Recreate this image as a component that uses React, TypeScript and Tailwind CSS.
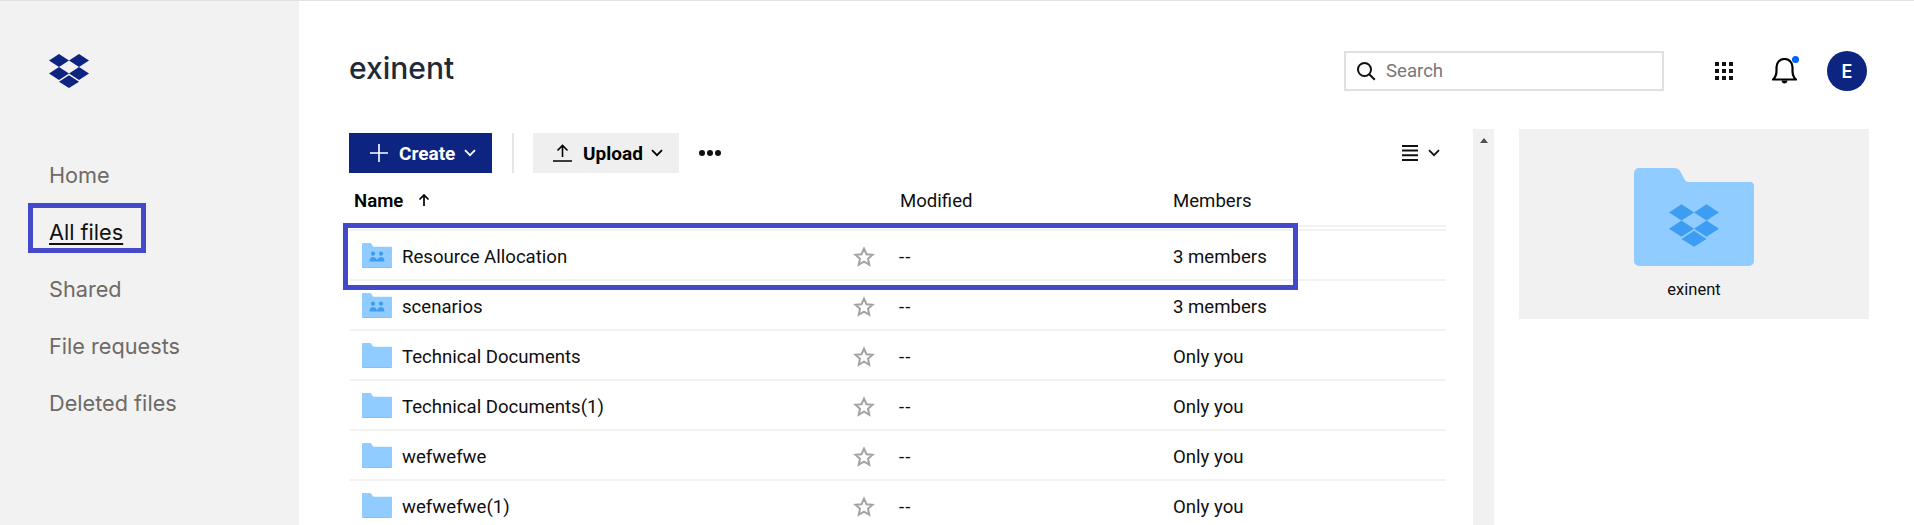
import React from "react";

const rows = [
  { name: "Resource Allocation", shared: true, members: "3 members" },
  { name: "scenarios", shared: true, members: "3 members" },
  { name: "Technical Documents", shared: false, members: "Only you" },
  { name: "Technical Documents(1)", shared: false, members: "Only you" },
  { name: "wefwefwe", shared: false, members: "Only you" },
  { name: "wefwefwe(1)", shared: false, members: "Only you" },
];

function DropboxMark({ className, fill }: { className: string; fill: string }) {
  return (
    <svg viewBox="0 0 40 34" className={className} fill={fill}>
      <polygon points="0,6.5 10,0 20,6.5 10,13" />
      <polygon points="20,6.5 30,0 40,6.5 30,13" />
      <polygon points="0,19.5 10,13 20,19.5 10,26" />
      <polygon points="20,19.5 30,13 40,19.5 30,26" />
      <polygon points="10,27.7 20,21.2 30,27.7 20,34" />
    </svg>
  );
}

function FolderIcon({ shared }: { shared: boolean }) {
  return (
    <svg viewBox="0 0 30 25" className="w-[30px] h-[25px] shrink-0">
      <path d="M0 1.2C0 .5.5 0 1.2 0H8c.7 0 1.2.3 1.5.9L10.6 3c.3.5.6.7 1.2.7H29c.6 0 1 .4 1 1V23.8c0 .7-.5 1.2-1.2 1.2H1.2C.5 25 0 24.5 0 23.8Z" fill="#90ccff" />
      <path d="M0 23.8V23.2c0 .7.5 1 1.2 1h27.6c.7 0 1.2-.3 1.2-1v.6c0 .7-.5 1.2-1.2 1.2H1.2C.5 25 0 24.5 0 23.8Z" fill="#7cbdf5" />
      {shared && (
        <g fill="#3d9df2">
          <circle cx="11" cy="10.7" r="2.1" />
          <circle cx="19" cy="10.7" r="2.1" />
          <path d="M7.5 18.5c0-3 1.6-4.4 3.5-4.4 1.5 0 2.9.9 3.4 2.3h1.2c.5-1.4 1.9-2.3 3.4-2.3 1.9 0 3.5 1.4 3.5 4.4Z" />
        </g>
      )}
    </svg>
  );
}

function Star() {
  return (
    <svg viewBox="0 0 22 21" className="w-[22px] h-[21px] shrink-0" fill="none" stroke="#a3a3a3" strokeWidth="2">
      <path d="M11 2.6l2.5 5.6 6 .6-4.5 4 1.3 6-5.3-3.1-5.3 3.1 1.3-6-4.5-4 6-.6Z" strokeLinejoin="miter" />
    </svg>
  );
}

function Chevron({ stroke }: { stroke: string }) {
  return (
    <svg viewBox="0 0 12 8" className="w-[12px] h-[8px]" fill="none" stroke={stroke} strokeWidth="1.8">
      <path d="M1 1.2l5 5 5-5" />
    </svg>
  );
}

export default function App() {
  return (
    <div className="relative h-[525px] w-[1914px] overflow-hidden bg-white border-t border-[#e2e2e8] font-['Roboto',sans-serif] text-[#0f0f0f]">
      <div className="flex h-full">
        <aside className="w-[299px] shrink-0 bg-[#f2f2f2] pl-[49px] pt-[53px] font-['Inter',sans-serif]">
          <DropboxMark className="w-[40px] h-[34px]" fill="#0d2481" />
          <nav className="mt-[59px] flex flex-col text-[21.7px] text-[#6f6a65]">
            <a className="h-[57px] flex items-center">Home</a>
            <a className="h-[57px] flex items-center text-[#111]"><span className="underline underline-offset-[3px] decoration-2">All files</span></a>
            <a className="h-[57px] flex items-center">Shared</a>
            <a className="h-[57px] flex items-center">File requests</a>
            <a className="h-[57px] flex items-center">Deleted files</a>
          </nav>
        </aside>

        <main className="flex-1 min-w-0 pl-[50px]">
          <header className="h-[128px] flex items-start">
            <h1 className="w-[104px] mt-[45px] text-[30px] leading-[44px] font-medium font-['Inter',sans-serif] text-[#1e2a38]">exinent</h1>
            <div className="ml-[891px] mt-[50px] w-[320px] h-[40px] border-2 border-[#e0e0e0] flex items-center pl-[10px]">
              <svg viewBox="0 0 20 20" className="w-[20px] h-[20px]" fill="none" stroke="#111" strokeWidth="2">
                <circle cx="8.5" cy="8.5" r="6.5" />
                <path d="M13.2 13.2l5.6 5.6" />
              </svg>
              <span className="ml-[10px] pt-[2px] text-[18.6px] text-[#777]">Search</span>
            </div>
            <div className="ml-[51px] mt-[61px] grid grid-cols-3 gap-[3px]">
              {Array.from({ length: 9 }).map((_, i) => (
                <div key={i} className="w-[4px] h-[4px] bg-[#111]" />
              ))}
            </div>
            <div className="relative ml-[39px] mt-[57px] w-[25px] h-[26px]">
              <svg viewBox="0 0 25 26" className="w-[25px] h-[26px]" fill="none" stroke="#000" strokeWidth="2.2">
                <path d="M1 21.5c2.5-2 3.500-4.500 3.500-9V9a8 8 0 0 1 16 0v3.500c0 4.500 1 7 3.500 9Z" strokeLinejoin="round" />
                <path d="M9.500 22.500c.3 2 1.500 3 3 3s2.700-1 3-3Z" fill="#000" stroke="none" />
              </svg>
              <span className="absolute left-[20px] -top-[2px] w-[7px] h-[7px] rounded-full bg-[#0061fe]" />
            </div>
            <div className="ml-[30px] mt-[50px] w-[40px] h-[40px] rounded-full bg-[#0d2481] text-white flex items-center justify-center text-[18px] font-semibold font-['Inter',sans-serif]">E</div>
          </header>

          <div className="flex">
            <section className="w-[1124px] shrink-0">
              <div className="flex h-[40px] mt-[4px] items-center">
                <button className="w-[143px] h-[40px] bg-[#0d2481] text-white flex items-center pl-[21px] text-[19px] font-bold">
                  <svg viewBox="0 0 18 18" className="w-[18px] h-[18px]" stroke="#fff" strokeWidth="1.6"><path d="M9 0v18M0 9h18" /></svg>
                  <span className="ml-[11px] pt-[2px]">Create</span>
                  <span className="ml-[9px]"><Chevron stroke="#fff" /></span>
                </button>
                <div className="ml-[20px] w-[2px] h-[40px] bg-[#e6e6e6]" />
                <button className="ml-[19px] w-[146px] h-[40px] bg-[#efefef] flex items-center pl-[20px] text-[19px] font-bold text-black">
                  <svg viewBox="0 0 19 18" className="w-[19px] h-[18px]" fill="none" stroke="#000" strokeWidth="1.6"><path d="M0 17h19M9.500 13V1.500M4.500 6.500l5-5 5 5" /></svg>
                  <span className="ml-[11px] pt-[2px]">Upload</span>
                  <span className="ml-[8px]"><Chevron stroke="#000" /></span>
                </button>
                <div className="ml-[20px] flex gap-[2px]">
                  <span className="w-[6px] h-[6px] rounded-full bg-[#111]" />
                  <span className="w-[6px] h-[6px] rounded-full bg-[#111]" />
                  <span className="w-[6px] h-[6px] rounded-full bg-[#111]" />
                </div>
                <div className="ml-auto mr-[33px] flex items-center gap-[10px]">
                  <svg viewBox="0 0 16 16" className="w-[16px] h-[16px]" fill="#111">
                    <path d="M0 0h16v2H0zM0 4.600h16v2H0zM0 9.200h16v2H0zM0 14h16v2H0z" />
                  </svg>
                  <Chevron stroke="#111" />
                </div>
              </div>

              <div className="w-[1096px] ml-px">
                <div className="h-[54px] pt-[3px] flex items-center border-b-2 border-[#f2f2f2] text-[18.6px]">
                  <div className="w-[550px] pl-[4px] pt-[2px] flex items-center font-semibold text-black">
                    Name
                    <svg viewBox="0 0 12 12" className="ml-[15px] -mt-[2px] w-[12px] h-[12px]" fill="none" stroke="#000" strokeWidth="1.700"><path d="M6 12V1M1.500 5.500L6 1l4.500 4.500" /></svg>
                  </div>
                  <div className="w-[273px] pt-[3px]">Modified</div>
                  <div className="pt-[3px]">Members</div>
                </div>
                <div className="h-[2px]" />
                {rows.map((r) => (
                  <div key={r.name} className="h-[50px] pt-[2px] flex items-center border-t-2 border-[#f2f2f2] text-[18.6px]">
                    <div className="w-[503px] pl-[12px] flex items-center">
                      <FolderIcon shared={r.shared} />
                      <span className="ml-[10px] pt-[3px]">{r.name}</span>
                    </div>
                    <div className="w-[47px]"><Star /></div>
                    <div className="w-[273px] tracking-[1px] -ml-px pt-[3px]">--</div>
                    <div className="ml-px pt-[3px]">{r.members}</div>
                  </div>
                ))}
              </div>
            </section>

            <div className="w-[21px] h-[400px] shrink-0 bg-[#f1f1f1] flex justify-center pt-[9px]">
              <div className="w-0 h-0 border-x-[4.500px] border-x-transparent border-b-[5px] border-b-[#505050]" />
            </div>

            <aside className="ml-[25px] w-[350px] h-[190px] shrink-0 bg-[#f1f1f1] flex flex-col items-center pt-[39px]">
              <div className="relative w-[120px] h-[98px]">
                <svg viewBox="0 0 120 98" className="w-[120px] h-[98px]">
                  <path d="M0 5a5 5 0 0 1 5-5h35c3 0 5 1 6.500 4l4 7.500c1.500 2 2.500 2.500 5 2.500H116a4 4 0 0 1 4 4v75a5 5 0 0 1-5 5H5a5 5 0 0 1-5-5Z" fill="#90ccff" />
                </svg>
                <DropboxMark className="absolute left-[35px] top-[36px] w-[50px] h-[43px]" fill="#3d9df2" />
              </div>
              <div className="mt-[14px] text-[16.5px] leading-[20px]">exinent</div>
            </aside>
          </div>
        </main>
      </div>

      <div className="absolute left-[28px] top-[202px] w-[118px] h-[50px] border-[5px] border-[#4349c9]" />
      <div className="absolute left-[343px] top-[222px] w-[955px] h-[67px] border-[5px] border-[#4349c9]" />
    </div>
  );
}
